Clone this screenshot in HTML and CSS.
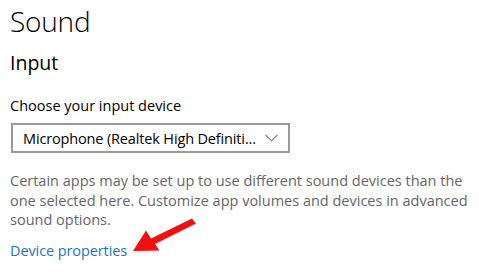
FILE: index.html
```html
<!DOCTYPE html>
<html>
<head>
<meta charset="utf-8">
<link rel="stylesheet" href="styles.css">
</head>
<body>
<div class="page">
  <h1 class="title">Sound</h1>
  <h2 class="section">Input</h2>
  <div class="label">Choose your input device</div>
  <div class="select">
    <span class="select-text">Microphone (Realtek High Definiti...</span>
    <svg class="chev" width="13" height="8" viewBox="0 0 13 8"><path d="M0.5 0.8 L6.5 6.8 L12.5 0.8" fill="none" stroke="#777" stroke-width="1.1"/></svg>
  </div>
  <p class="note">Certain apps may be set up to use different sound devices than the one selected here. Customize app volumes and devices in advanced sound options.</p>
  <div class="link-row">
    <a class="link">Device properties</a>
  </div>
</div>
<svg class="arrow" width="479" height="277" viewBox="0 0 479 277">
  <path d="M133 251 L159.5 250.5 L155 244 L196 223.5 L192 218.5 L151 238.5 L146 230.5 Z" fill="#f2100f"/>
</svg>
</body>
</html>
```
FILE: styles.css
```css
html, body { margin: 0; padding: 0; background: #fff; }
body { font-family: "Open Sans", "Noto Sans", sans-serif; color: #000; position: relative; width: 479px; height: 277px; overflow: hidden; }
.page { padding: 0 0 0 10px; width: 469px; }
.title { font-weight: 300; font-size: 28px; line-height: 38px; margin: 0; padding-top: 2px; letter-spacing: -0.2px; }
.section { font-weight: 400; font-size: 19.5px; line-height: 26px; margin: 10px 0 0 0; }
.label { font-size: 14.5px; line-height: 20px; margin-top: 20px; }
.select { margin-top: 7px; margin-left: 1px; height: 26px; border: 2px solid #999; display: flex; align-items: center; justify-content: space-between; padding: 0 10px 0 10px; box-sizing: content-box; width: 255px; }
.select-text { font-size: 14.5px; letter-spacing: -0.15px; }
.chev { display: block; }
.note { margin: 18px 0 0 0; font-size: 14.5px; line-height: 19.5px; color: #666; width: 465px; }
.link-row { margin-top: 9px; }
.link { color: #1a74c4; font-size: 14.5px; line-height: 20px; letter-spacing: -0.1px; }
.arrow { position: absolute; left: 0; top: 0; pointer-events: none; }
```
